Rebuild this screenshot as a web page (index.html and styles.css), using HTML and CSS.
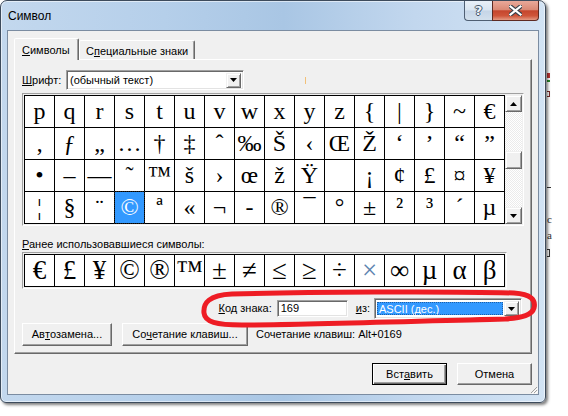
FILE: index.html
```html
<!DOCTYPE html>
<html lang="ru">
<head>
<meta charset="utf-8">
<title>Символ</title>
<link rel="stylesheet" href="styles.css">
</head>
<body>
<div class="desk">
  <div class="window">
    <div class="titlebar">
      <span class="title">Символ</span>
      <div class="caption-btns">
        <div class="cbtn help"><span class="qmark">?</span></div>
        <div class="cbtn close">
          <svg width="13" height="11" viewBox="0 0 13 11">
            <path d="M1.5 1.5L11.5 9.5M11.5 1.5L1.5 9.5" stroke="#39404a" stroke-width="4.4" stroke-linecap="square" fill="none"/>
            <path d="M1.5 1.5L11.5 9.5M11.5 1.5L1.5 9.5" stroke="#fff" stroke-width="2.2" stroke-linecap="square" fill="none"/>
          </svg>
        </div>
      </div>
    </div>
    <div class="client">
      <div class="tabs">
        <div class="tab active"><u>С</u>имволы</div>
        <div class="tab inactive">С<u>п</u>ециальные знаки</div>
      </div>
      <div class="panel">
        <div class="font-row">
          <span class="font-label"><u>Ш</u>рифт:</span>
          <div class="combo font-combo">
            <span class="combo-text">(обычный текст)</span>
            <span class="dd-btn"><svg width="7" height="4" viewBox="0 0 7 4"><path d="M0 0h7L3.5 4z"/></svg></span>
          </div>
          <span class="caret"></span>
        </div>
        <div class="grid-frame">
          <div class="grid">
            <span class="cell">p</span><span class="cell">q</span><span class="cell">r</span><span class="cell">s</span><span class="cell">t</span><span class="cell">u</span><span class="cell">v</span><span class="cell">w</span><span class="cell">x</span><span class="cell">y</span><span class="cell">z</span><span class="cell">{</span><span class="cell">|</span><span class="cell">}</span><span class="cell">~</span><span class="cell">€</span>
            <span class="cell">‚</span><span class="cell">ƒ</span><span class="cell">„</span><span class="cell">…</span><span class="cell">†</span><span class="cell">‡</span><span class="cell">ˆ</span><span class="cell">‰</span><span class="cell">Š</span><span class="cell">‹</span><span class="cell">Œ</span><span class="cell">Ž</span><span class="cell">‘</span><span class="cell">’</span><span class="cell">“</span><span class="cell">”</span>
            <span class="cell">•</span><span class="cell">–</span><span class="cell">—</span><span class="cell">˜</span><span class="cell">™</span><span class="cell">š</span><span class="cell">›</span><span class="cell">œ</span><span class="cell">ž</span><span class="cell">Ÿ</span><span class="cell">&nbsp;</span><span class="cell">¡</span><span class="cell">¢</span><span class="cell">£</span><span class="cell">¤</span><span class="cell">¥</span>
            <span class="cell">¦</span><span class="cell">§</span><span class="cell">¨</span><span class="cell selected">©</span><span class="cell">ª</span><span class="cell">«</span><span class="cell">¬</span><span class="cell">-</span><span class="cell">®</span><span class="cell">¯</span><span class="cell">°</span><span class="cell">±</span><span class="cell">²</span><span class="cell">³</span><span class="cell">´</span><span class="cell">µ</span>
          </div>
          <div class="vscroll">
            <div class="sb-btn"><svg width="7" height="4" viewBox="0 0 7 4"><path d="M0 4h7L3.5 0z"/></svg></div>
            <div class="sb-thumb"></div>
            <div class="sb-btn sb-down"><svg width="7" height="4" viewBox="0 0 7 4"><path d="M0 0h7L3.5 4z"/></svg></div>
          </div>
        </div>
        <div class="recent-label"><u>Р</u>анее использовавшиеся символы:</div>
        <div class="recent-frame">
          <div class="recent">
            <span class="rcell">€</span><span class="rcell">£</span><span class="rcell">¥</span><span class="rcell">©</span><span class="rcell">®</span><span class="rcell">™</span><span class="rcell">±</span><span class="rcell">≠</span><span class="rcell">≤</span><span class="rcell">≥</span><span class="rcell">÷</span><span class="rcell light">×</span><span class="rcell">∞</span><span class="rcell">µ</span><span class="rcell">α</span><span class="rcell">β</span>
          </div>
        </div>
        <div class="code-row">
          <span class="code-label"><u>К</u>од знака:</span>
          <div class="field code-field">169</div>
          <span class="from-label"><u>и</u>з:</span>
          <div class="combo from-combo">
            <span class="combo-sel">ASCII (дес.)</span>
            <span class="dd-btn"><svg width="7" height="4" viewBox="0 0 7 4"><path d="M0 0h7L3.5 4z"/></svg></span>
          </div>
        </div>
        <div class="btn-row">
          <div class="btn btn-auto">Ав<u>т</u>озамена...</div>
          <div class="btn btn-keys">Со<u>ч</u>етание клавиш...</div>
          <span class="keys-text">Сочетание клавиш: Alt+0169</span>
        </div>
      </div>
      <div class="dialog-btns">
        <div class="btn dbtn default">Вст<u>а</u>вить</div>
        <div class="btn dbtn">Отмена</div>
      </div>
      <svg class="grip" width="8" height="8" viewBox="0 0 8 8">
        <path d="M7 1L1 7M7 4L4 7M7 7L7 7" stroke="#a0a0a0" stroke-width="1" fill="none"/>
        <path d="M8 2L2 8M8 5L5 8" stroke="#fff" stroke-width="1" fill="none"/>
      </svg>
    </div>
    <svg class="mark" width="568" height="416" viewBox="0 0 568 416">
      <path d="M232 294 C300 292 450 291 514 293 C531 294 536 300 534 308 C532 315 523 318 505 319 C420 321 300 325 242 325 C216 325 205 322 204 313 C203 303 209 295 232 294 Z" stroke="#ee1c24" stroke-width="5" fill="none"/>
    </svg>
  </div>
  <div class="doc">
    <span class="m m1"></span>
    <span class="m m2"></span>
    <span class="m m3"></span>
    <span class="m m4"></span>
    <span class="m m5">c</span>
    <span class="m m6">a</span>
    <span class="m m7"></span>
  </div>
</div>
</body>
</html>
```
FILE: styles.css
```css
* { box-sizing: border-box; }
html, body { margin: 0; padding: 0; }
body {
  width: 568px;
  height: 416px;
  overflow: hidden;
  background: #fff;
  font-family: "Liberation Sans", Arial, sans-serif;
  font-size: 11px;
  line-height: 13px;
  color: #000;
}
u { text-decoration: underline; text-underline-offset: 1px; }

.desk { display: flex; width: 568px; height: 416px; }

.window {
  position: relative;
  flex: none;
  width: 546px;
  height: 403px;
  border: 1px solid #3d4b5c;
  border-radius: 7px 7px 6px 6px;
  padding: 0 6px 7px 6px;
  background: linear-gradient(to right, #c3d8ee 0%, #b5cfea 30%, #a9c6e4 52%, #c2d7ee 76%, #d2e3f4 100%);
  box-shadow: inset 0 0 0 1px rgba(255,255,255,.55), 2px 2px 3px rgba(0,0,0,.5);
  display: flex;
  flex-direction: column;
}

.titlebar {
  height: 29px;
  flex: none;
  display: flex;
  justify-content: space-between;
  align-items: flex-start;
}
.title {
  margin: 8px 0 0 1px;
  font-size: 12px;
  line-height: 14px;
  color: #000;
}
.caption-btns { display: flex; height: 20px; }
.cbtn {
  height: 20px;
  display: flex;
  align-items: center;
  justify-content: center;
  border: 1px solid #4f5f73;
  border-top: none;
}
.help {
  width: 28px;
  border-right: none;
  border-radius: 0 0 0 4px;
  background: linear-gradient(#e9f0f8 0%, #d9e5f1 48%, #c5d5e7 52%, #d3e0ed 100%);
}
.qmark {
  font-family: "DejaVu Sans", sans-serif;
  font-weight: bold;
  font-size: 13px;
  line-height: 14px;
  color: #eef3f8;
  text-shadow: 1px 0 #44556a, -1px 0 #44556a, 0 1px #44556a, 0 -1px #44556a;
}
.close {
  width: 47px;
  border-color: #5e2a22;
  border-radius: 0 0 4px 0;
  background: linear-gradient(#e9a99a 0%, #db8a76 45%, #c5462e 52%, #cf553a 78%, #e49a84 100%);
}

.client {
  position: relative;
  flex: 1;
  border: 1px solid #7b8ca1;
  background: #f0f0f0;
  padding: 7px 6px 0 6px;
  display: flex;
  flex-direction: column;
}

.tabs {
  height: 21px;
  flex: none;
  display: flex;
  align-items: flex-end;
}
.tab {
  border: 1px solid;
  border-bottom: none;
  border-color: #fff #696969 transparent #fff;
  border-radius: 2px 2px 0 0;
  box-shadow: inset -1px 0 #a0a0a0;
  background: #f0f0f0;
  white-space: nowrap;
}
.tab.active {
  position: relative;
  z-index: 1;
  width: 65px;
  height: 22px;
  margin-bottom: -1px;
  padding: 5px 0 0 7px;
}
.tab.inactive {
  width: 116px;
  height: 19px;
  padding: 4px 0 0 6px;
}

.panel {
  width: 518px;
  height: 295px;
  flex: none;
  border: 1px solid;
  border-color: #fff #696969 #696969 #fff;
  box-shadow: inset -1px -1px #a0a0a0;
  padding: 10px 7px 0 7px;
  display: flex;
  flex-direction: column;
}

.font-row { display: flex; align-items: center; height: 20px; }
.font-label { width: 44px; }

.combo, .field {
  border: 1px solid;
  border-color: #a0a0a0 #fff #fff #a0a0a0;
  box-shadow: inset 1px 1px #696969, inset -1px -1px #e3e3e3;
  background: #fff;
  display: flex;
  align-items: center;
}
.font-combo { width: 178px; height: 20px; padding: 2px; }
.combo-text { flex: 1; padding-left: 1px; }
.dd-btn {
  width: 15px;
  height: 15px;
  flex: none;
  border: 1px solid;
  border-color: #f0f0f0 #696969 #696969 #f0f0f0;
  box-shadow: inset 1px 1px #fff, inset -1px -1px #a0a0a0;
  background: #f0f0f0;
  display: flex;
  align-items: center;
  justify-content: center;
}
.caret { width: 1px; height: 7px; margin-left: 61px; background: #f2c078; }

.grid-frame {
  margin-top: 3px;
  width: 502px;
  border: 1px solid;
  border-color: #a0a0a0 #fff #fff #a0a0a0;
  padding: 1px;
  display: flex;
}
.grid {
  display: grid;
  grid-template-columns: repeat(16, 29px);
  grid-auto-rows: 31px;
  gap: 1px;
  padding: 1px;
  background: #000;
}
.cell, .rcell {
  background: #fff;
  font-family: "Liberation Serif", "Times New Roman", serif;
  text-align: center;
  overflow: hidden;
  white-space: nowrap;
}
.cell { font-size: 24px; line-height: 31px; }
.cell.selected {
  background: #3399ff;
  color: #fff;
  outline: 1px dotted #222;
}

.vscroll {
  width: 17px;
  height: 129px;
  display: flex;
  flex-direction: column;
  background: repeating-conic-gradient(#fff 0 25%, #ebebeb 0 50%) 0 0 / 2px 2px;
}
.sb-btn, .sb-thumb {
  border: 1px solid;
  border-color: #f0f0f0 #696969 #696969 #f0f0f0;
  box-shadow: inset 1px 1px #fff, inset -1px -1px #a0a0a0;
  background: #f0f0f0;
}
.sb-btn {
  height: 17px;
  display: flex;
  align-items: center;
  justify-content: center;
}
.sb-thumb { height: 18px; margin-top: 39px; }
.sb-down { margin-top: auto; }

.recent-label { margin-top: 12px; }
.recent-frame {
  margin-top: 1px;
  width: 485px;
  border: 1px solid;
  border-color: #a0a0a0 #fff #fff #a0a0a0;
  padding: 1px;
}
.recent {
  display: grid;
  grid-template-columns: repeat(16, 29px);
  grid-auto-rows: 31px;
  gap: 1px;
  padding: 1px;
  background: #000;
}
.rcell { font-size: 27px; line-height: 31px; }
.rcell.light { color: #5d84b0; }

.code-row {
  margin-top: 9px;
  height: 21px;
  display: flex;
  align-items: center;
  justify-content: flex-end;
  padding-right: 2px;
}
.code-label { margin-right: 5px; }
.code-field { width: 71px; height: 17px; padding-left: 3px; }
.from-label { margin-left: 8px; margin-right: 4px; }
.from-combo { width: 148px; height: 21px; padding: 2px; }
.combo-sel {
  flex: 1;
  align-self: stretch;
  margin: 1px 1px 1px 0;
  background: #3399ff;
  color: #fff;
  padding-left: 2px;
  line-height: 15px;
  outline: 1px dotted #1c5fa8;
  outline-offset: -1px;
}

.btn {
  height: 23px;
  display: flex;
  align-items: center;
  justify-content: center;
  border: 1px solid;
  border-color: #fff #696969 #696969 #fff;
  box-shadow: inset -1px -1px #a0a0a0;
  background: #f0f0f0;
  white-space: nowrap;
}
.btn-row { margin-top: 4px; display: flex; align-items: center; }
.btn-auto { width: 90px; }
.btn-keys { width: 126px; margin-left: 10px; }
.keys-text { margin-left: 8px; }

.dialog-btns {
  margin-top: 9px;
  display: flex;
  justify-content: flex-end;
  gap: 10px;
}
.dbtn { width: 75px; height: 22px; }
.dbtn.default {
  border: 1px solid #000;
  box-shadow: inset 1px 1px #fff, inset -1px -1px #696969, inset -2px -2px #a0a0a0;
}

.grip { position: absolute; right: 0; bottom: 0; }
.mark { position: absolute; left: -1px; top: -1px; pointer-events: none; }

.doc {
  flex: 1;
  display: flex;
  flex-direction: column;
  padding-left: 1px;
  font-family: "Liberation Serif", serif;
  font-size: 11px;
  line-height: 11px;
  color: #333;
}
.m { display: block; }
.m1 { margin-top: 73px; width: 3px; height: 5px; background: #b33; }
.m2 { margin-top: 2px; width: 3px; height: 2px; background: #2a8a2a; }
.m3 { margin-top: 9px; width: 3px; height: 6px; border: 1px solid #7a2a2a; border-left: none; }
.m4 { margin-top: 90px; width: 4px; height: 1px; background: #333; }
.m5 { margin-top: 26px; }
.m6 { margin-top: 5px; }
.m7 { margin-top: 8px; width: 3px; height: 8px; border: 1px solid #333; border-left: none; }
```
